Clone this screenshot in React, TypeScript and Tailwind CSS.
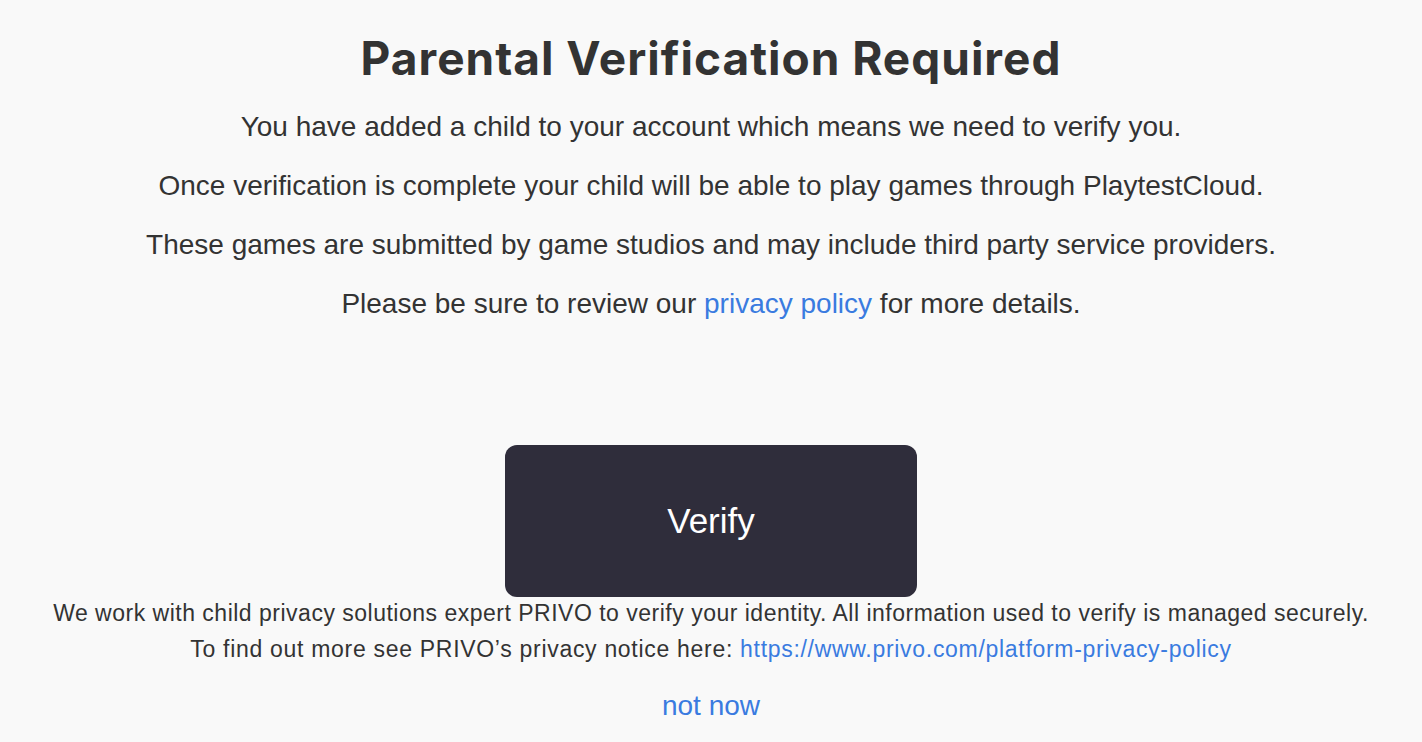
import React from 'react';

const body = { fontFamily: '"Liberation Sans", Arial, sans-serif' };
const heading = { fontFamily: 'Inter, "Noto Sans", sans-serif' };

export default function App() {
  return (
    <div className="min-h-screen w-full bg-[#f9f9f9] text-[#333333] flex flex-col items-center" style={body}>
      <h1 className="mt-[29px] text-[46px] leading-[58px] font-bold tracking-[1px] text-[#333333]" style={heading}>
        Parental Verification Required
      </h1>
      <div className="mt-[24px] flex flex-col items-center gap-[27px] text-[28px] leading-[32px]">
        <p>You have added a child to your account which means we need to verify you.</p>
        <p>Once verification is complete your child will be able to play games through PlaytestCloud.</p>
        <p>These games are submitted by game studios and may include third party service providers.</p>
        <p>
          Please be sure to review our <a className="text-[#3a7be0]">privacy policy</a> for more details.
        </p>
      </div>
      <button className="mt-[125px] w-[412px] h-[152px] rounded-[12px] bg-[#2f2d3b] text-white text-[35px]">
        Verify
      </button>
      <div className="-mt-[2px] flex flex-col items-center text-[23px] leading-[36px] tracking-[0.5px]">
        <p>We work with child privacy solutions expert PRIVO to verify your identity. All information used to verify is managed securely.</p>
        <p className="tracking-[0.7px]">
          To find out more see PRIVO’s privacy notice here:{' '}
          <a className="text-[#3a7be0]">https://www.privo.com/platform-privacy-policy</a>
        </p>
      </div>
      <a className="mt-[23px] text-[28px] leading-[32px] text-[#3a7be0]">not now</a>
    </div>
  );
}
